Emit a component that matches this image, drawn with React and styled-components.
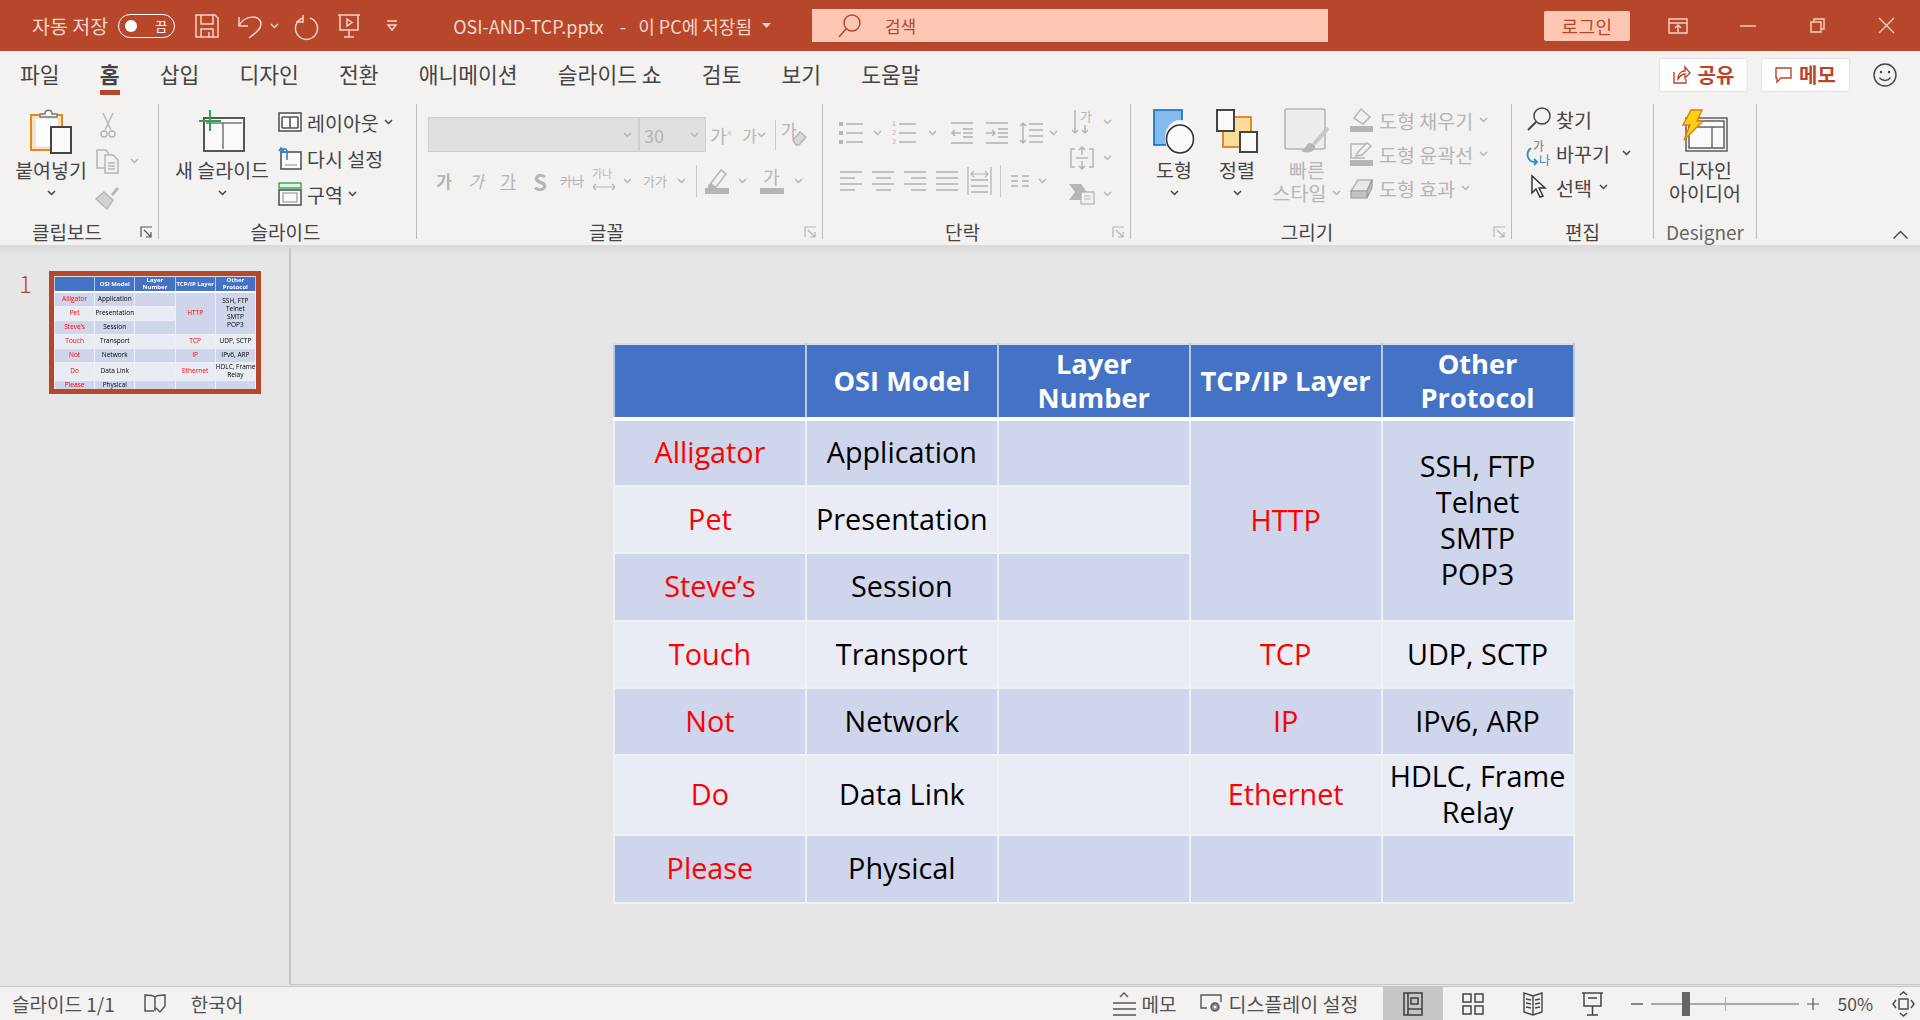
import React from 'react';
import styled, { createGlobalStyle } from 'styled-components';

const UI_FONT = '"Noto Sans CJK KR", "Noto Sans", sans-serif';
const DISABLED = '#b5b5b5';
const DARK = '#444';

const GlobalStyle = createGlobalStyle`
  html, body {
    margin: 0;
    padding: 0;
    background: #e6e6e6;
    overflow: hidden;
  }
  * {
    box-sizing: border-box;
  }
  svg {
    display: block;
    flex-shrink: 0;
    overflow: visible;
  }
`;

const Page = styled.div`
  width: 1920px;
  height: 1020px;
  display: flex;
  flex-direction: column;
  font-family: ${UI_FONT};
  color: ${DARK};
`;

/* title bar */
const TitleBar = styled.div`
  height: 51px;
  flex-shrink: 0;
  background: #b7472a;
  color: #f9d8cc;
  display: flex;
  align-items: center;
  padding-left: 32px;
  font-size: 18px;
`;

const TitleSlot = styled.div`
  margin-left: ${(p) => p.$ml || 0}px;
  font-size: ${(p) => p.$fs || 18}px;
  display: flex;
  align-items: center;
  white-space: pre;
`;

const Toggle = styled.div`
  width: 57px;
  height: 24px;
  border: 1.5px solid #fff;
  border-radius: 12px;
  display: flex;
  align-items: center;
  justify-content: space-between;
  padding: 0 7px 0 6px;
  font-size: 13px;
  color: #fff;

  &::before {
    content: '';
    width: 12px;
    height: 12px;
    border-radius: 50%;
    background: #fff;
  }
`;

const SearchBox = styled.div`
  width: 516px;
  height: 33px;
  margin-left: 41px;
  background: #fec7b4;
  color: #b7472a;
  display: flex;
  align-items: center;
  gap: 24px;
  padding-left: 27px;
  font-size: 17px;
`;

const LoginButton = styled.div`
  width: 86px;
  height: 30px;
  margin-left: 216px;
  background: #fec7b4;
  color: #b7472a;
  border-radius: 2px;
  display: flex;
  align-items: center;
  justify-content: center;
  font-size: 18px;
  letter-spacing: 0.5px;
`;

/* tabs */
const TabRow = styled.div`
  height: 47px;
  flex-shrink: 0;
  background: #f3f2f1;
  display: flex;
  align-items: center;
  gap: 40.2px;
  padding: 0 23px 0 20px;
`;

const Tab = styled.div`
  position: relative;
  font-size: 21.5px;
  line-height: 30px;
  margin-top: -2px;
  font-weight: ${(p) => (p.$active ? 700 : 400)};
  white-space: nowrap;

  ${(p) =>
    p.$active &&
    `
    &::after {
      content: '';
      position: absolute;
      left: 0;
      right: 0;
      bottom: -6px;
      height: 5px;
      background: #b7472a;
    }
  `}
`;

const TabActions = styled.div`
  margin-left: auto;
  display: flex;
  align-items: center;
  gap: 13px;
`;

const ActionButton = styled.div`
  width: 89px;
  height: 34px;
  background: #fff;
  border: 1px solid #e4e2e0;
  border-radius: 3px;
  color: #b7472a;
  font-size: 20px;
  font-weight: 700;
  display: flex;
  align-items: center;
  justify-content: center;
  gap: 7px;
`;

const Smile = styled.div`
  margin-left: 10px;
`;

/* ribbon */
const Ribbon = styled.div`
  height: 147px;
  flex-shrink: 0;
  background: #f3f2f1;
  display: flex;
  padding: 6px 0;
  position: relative;
`;

const Group = styled.div`
  width: ${(p) => p.$w}px;
  flex-shrink: 0;
  height: 135px;
  border-right: 1px solid #b9b9b9;
  position: relative;
  display: flex;
  flex-direction: column;
`;

const GroupBody = styled.div`
  height: 114px;
  display: flex;
  padding-left: ${(p) => p.$pl || 0}px;
`;

const GroupLabel = styled.div`
  height: 21px;
  line-height: 27px;
  text-align: center;
  font-size: 19px;
  padding-right: ${(p) => p.$pr || 0}px;
  color: ${(p) => p.$color || DARK};
`;

const Launcher = styled.div`
  position: absolute;
  right: 5px;
  bottom: 1px;
`;

const LargeButton = styled.div`
  width: ${(p) => p.$w}px;
  flex-shrink: 0;
  display: flex;
  flex-direction: column;
  align-items: center;
  padding-top: 3px;
  color: ${(p) => (p.$off ? DISABLED : DARK)};
`;

const LargeIcon = styled.div`
  height: 48px;
  margin-bottom: 3px;
  display: flex;
  align-items: center;
  justify-content: center;
`;

const LargeLine = styled.div`
  height: 23px;
  line-height: 23px;
  display: flex;
  align-items: center;
  justify-content: center;
  gap: 6px;
  font-size: 19.5px;
  white-space: nowrap;
`;

const SmallColumn = styled.div`
  margin-left: ${(p) => p.$ml || 0}px;
  margin-top: ${(p) => p.$mt || 0}px;
  display: flex;
  flex-direction: column;
`;

const SmallRow = styled.div`
  height: ${(p) => p.$h || 34}px;
  display: flex;
  align-items: center;
  gap: ${(p) => p.$gap || 0}px;
  font-size: 19.5px;
  white-space: nowrap;
  color: ${(p) => (p.$off ? DISABLED : DARK)};
`;

const Slot = styled.div`
  width: ${(p) => p.$w}px;
  flex-shrink: 0;
  display: flex;
  align-items: center;
  justify-content: center;
  color: ${DISABLED};
`;

const ToolRow = styled.div`
  height: 35px;
  display: flex;
  align-items: center;
  margin-left: ${(p) => p.$ml || 0}px;
  margin-top: ${(p) => p.$mt || 0}px;
`;

const ToolColumn = styled.div`
  display: flex;
  flex-direction: column;
`;

const ComboBox = styled.div`
  width: ${(p) => p.$w}px;
  height: 35px;
  flex-shrink: 0;
  background: #e1e0de;
  border: 1px solid #cfcfcf;
  display: flex;
  align-items: center;
  justify-content: space-between;
  padding: 0 6px 0 4px;
  font-size: 18px;
  color: ${DISABLED};
`;

const Glyph = styled.span`
  font-size: ${(p) => p.$size || 16}px;
  font-weight: ${(p) => (p.$bold ? 700 : 400)};
  font-style: ${(p) => (p.$italic ? 'italic' : 'normal')};
  text-decoration: ${(p) => p.$deco || 'none'};
  line-height: 1;
`;

const VLine = styled.div`
  width: 1px;
  height: ${(p) => p.$h || 30}px;
  background: #c8c8c8;
`;

const CollapseButton = styled.div`
  position: absolute;
  right: 12px;
  bottom: 6px;
`;

/* main area */
const Main = styled.div`
  flex: 1;
  min-height: 0;
  display: flex;
  border-bottom: 1px solid #c6c6c6;
  padding-bottom: 1px;
  background: #e6e6e6;
  position: relative;

  &::before {
    content: '';
    position: absolute;
    left: 0;
    right: 0;
    top: 0;
    height: 10px;
    background: linear-gradient(#d9d9d9, #e6e6e6);
  }
`;

const ThumbPane = styled.div`
  width: 291px;
  flex-shrink: 0;
  border-right: 2px solid #c6c6c6;
  margin-top: 3px;
  padding: 23px 0 0 19px;
  display: flex;
  align-items: flex-start;
  position: relative;
`;

const ThumbNumber = styled.div`
  width: 30px;
  color: #b7472a;
  font-size: 24px;
  font-weight: 300;
  line-height: 1;
`;

const Thumb = styled.div`
  width: 212px;
  height: 123px;
  border: 5px solid #b7472a;
  background: #eef0f6;
  overflow: hidden;
  filter: blur(0.35px);
`;

const Editor = styled.div`
  flex: 1;
  border-bottom: 1px solid #c6c6c6;
  padding: 98px 0 0 322px;
`;

const OsiGrid = styled.table`
  width: ${(p) => p.$cw * 5}px;
  table-layout: fixed;
  border-collapse: collapse;
  font-family: "Open Sans", "Noto Sans", sans-serif;
  font-size: ${(p) => p.$fs}px;
  line-height: ${(p) => p.$lh}px;
  text-align: center;
  color: #000;
  white-space: nowrap;
`;

const HeadCell = styled.th`
  padding: 0;
  background: #4472c4;
  color: #fff;
  font-size: ${(p) => p.$fs}px;
  line-height: ${(p) => p.$lh}px;
  font-weight: 700;
  border: ${(p) => p.$line}px solid #b9c8e6;
  border-bottom: ${(p) => p.$line * 2}px solid #fff;
  border-top-color: #d7dcea;
`;

const BodyCell = styled.td`
  padding: 0 0 ${(p) => p.$line}px;
  background: ${(p) => (p.$alt ? '#e9ebf5' : '#cfd5ea')};
  color: ${(p) => (p.$red ? '#ff0000' : '#000')};
  border: ${(p) => p.$line}px solid #eef0f7;
`;

/* status bar */
const StatusBar = styled.div`
  height: 33px;
  flex-shrink: 0;
  background: #f3f2f1;
  display: flex;
  align-items: center;
  font-size: 19.5px;
  color: #505050;
  padding: 0 5px 0 12px;
`;

const StatusItem = styled.div`
  margin-left: ${(p) => p.$ml || 0}px;
  font-size: ${(p) => p.$fs || 19}px;
  display: flex;
  align-items: center;
  gap: ${(p) => p.$gap || 0}px;
  white-space: nowrap;
`;

const StatusRight = styled.div`
  margin-left: auto;
  display: flex;
  align-items: center;
`;

const ViewButton = styled.div`
  width: ${(p) => p.$w}px;
  height: 33px;
  flex-shrink: 0;
  display: flex;
  align-items: center;
  justify-content: center;
  background: ${(p) => (p.$on ? '#c6c6c6' : 'transparent')};
`;

const ZoomTrack = styled.div`
  width: 148px;
  height: 2px;
  margin: 0 8px;
  background: #aaa;
  position: relative;
`;

const ZoomHandle = styled.div`
  position: absolute;
  left: 31px;
  top: -11px;
  width: 8px;
  height: 24px;
  background: #666;
`;

const ZoomTick = styled.div`
  position: absolute;
  left: 74px;
  top: -6px;
  width: 1px;
  height: 14px;
  background: #aaa;
`;

/* icons */
const Chev = ({ off, color }) => (
  <svg width="9" height="6" viewBox="0 0 9 6" fill="none" stroke={color || (off ? DISABLED : '#444')} strokeWidth="1.5">
    <path d="M1 1l3.5 3.5L8 1" />
  </svg>
);

const Launch = ({ off }) => (
  <svg width="13" height="12" viewBox="0 0 13 12" fill="none" stroke={off ? DISABLED : '#555'} strokeWidth="1.2">
    <path d="M1 11V1h11M4 4l7 7M11 6v5H6" />
  </svg>
);

const Lines = ({ x = 0, w = 22, ys, color = DISABLED, sw = 1.6 }) => (
  <g stroke={color} strokeWidth={sw}>
    {ys.map((y) => (
      <line key={y} x1={x} x2={x + w} y1={y} y2={y} />
    ))}
  </g>
);

const PasteIcon = () => (
  <svg width="42" height="46" viewBox="0 0 42 46">
    <rect x="1" y="7" width="31" height="35" fill="#fbe3c0" stroke="#e08a1e" strokeWidth="2" />
    <rect x="5" y="10" width="23" height="29" fill="#fff" stroke="#ddd" />
    <path d="M10 9V6h5c0-5 7-5 7 0h5v3z" fill="#fafafa" stroke="#777" strokeWidth="1.4" />
    <rect x="21" y="19" width="20" height="26" fill="#fafafa" stroke="#444" strokeWidth="2" />
  </svg>
);

const CutIcon = () => (
  <svg width="16" height="26" viewBox="0 0 16 26" fill="none" stroke={DISABLED} strokeWidth="1.4">
    <path d="M3 1l8 17M13 1L5 18" />
    <circle cx="4" cy="22" r="3" />
    <circle cx="12" cy="22" r="3" />
  </svg>
);

const CopyIcon = () => (
  <svg width="24" height="25" viewBox="0 0 24 25" fill="none" stroke={DISABLED} strokeWidth="1.5">
    <path d="M9 19H1V1h9l3 4" />
    <path d="M9 6h8l5 5v13H9z" fill="#f3f2f1" />
    <path d="M12 14h7M12 17h7M12 20h7" />
  </svg>
);

const PainterIcon = () => (
  <svg width="25" height="25" viewBox="0 0 25 25">
    <path d="M16 9L22 2l2 2-6 7z" fill={DISABLED} />
    <path d="M9 7l9 8-6 9-11-10z" fill="#d2d2d2" stroke={DISABLED} strokeWidth="1.4" />
  </svg>
);

const NewSlideIcon = () => (
  <svg width="46" height="42" viewBox="0 0 46 42" fill="none">
    <rect x="5" y="8" width="40" height="33" fill="#fafafa" stroke="#555" strokeWidth="2" />
    <path d="M7 13h36M24 13v26" stroke="#777" strokeWidth="1.5" />
    <path d="M11 0v21M0 11h22" stroke="#2ea44f" strokeWidth="2" />
  </svg>
);

const LayoutIcon = () => (
  <svg width="24" height="20" viewBox="0 0 24 20" fill="none" stroke="#555" strokeWidth="1.6">
    <rect x="1" y="1" width="22" height="18" fill="#fafafa" />
    <path d="M4 5h16M4 16h16M12 5v11M4 5v11M20 5v11" />
  </svg>
);

const ResetIcon = () => (
  <svg width="24" height="24" viewBox="0 0 24 24" fill="none">
    <rect x="3" y="6" width="20" height="17" fill="#fafafa" stroke="#555" strokeWidth="1.6" />
    <path d="M7 19h12" stroke="#888" />
    <path d="M8 14V5c0-3-6-3-6 1M0 5l2-3 3 3" transform="translate(1 0)" stroke="#2b88d8" strokeWidth="1.6" />
  </svg>
);

const SectionIcon = () => (
  <svg width="24" height="24" viewBox="0 0 24 24" fill="none">
    <rect x="1" y="1" width="22" height="5" fill="#e4f3e6" stroke="#2ea44f" strokeWidth="1.4" />
    <rect x="1" y="8" width="22" height="15" fill="#fafafa" stroke="#555" strokeWidth="1.6" />
    <rect x="5" y="11" width="14" height="9" stroke="#888" />
  </svg>
);

const ClearFmtIcon = () => (
  <svg width="26" height="26" viewBox="0 0 26 26">
    <text x="0" y="15" fontSize="17" fill={DISABLED} fontFamily={UI_FONT}>가</text>
    <path d="M12 18l7-8 6 5-7 8h-3z" fill="#d8d8d8" stroke={DISABLED} strokeWidth="1.4" />
  </svg>
);

const SpacingIcon = () => (
  <svg width="24" height="26" viewBox="0 0 24 26" fill="none" stroke={DISABLED}>
    <text x="0" y="10" fontSize="11" fill={DISABLED} stroke="none" fontFamily={UI_FONT}>가나</text>
    <path d="M1 19h22M1 19l3-3M1 19l3 3M23 19l-3-3M23 19l-3 3" strokeWidth="1.2" />
  </svg>
);

const HighlightIcon = () => (
  <svg width="24" height="26" viewBox="0 0 24 26">
    <path d="M6 15L16 2l5 4-10 13-6 1z" fill="#f3f2f1" stroke={DISABLED} strokeWidth="1.5" />
    <path d="M3 17l3-2 5 4-1 1H3z" fill={DISABLED} />
    <rect x="0" y="20" width="24" height="6" fill={DISABLED} />
  </svg>
);

const FontColorIcon = () => (
  <svg width="24" height="26" viewBox="0 0 24 26">
    <text x="3" y="16" fontSize="18" fill={DISABLED} fontFamily={UI_FONT}>가</text>
    <rect x="0" y="20" width="24" height="6" fill={DISABLED} />
  </svg>
);

const BulletsIcon = ({ numbered }) => (
  <svg width="24" height="24" viewBox="0 0 24 24">
    {numbered ? (
      <g fill={DISABLED} fontSize="7" fontFamily={UI_FONT}>
        <text x="0" y="5">1</text>
        <text x="0" y="14">2</text>
        <text x="0" y="23">3</text>
      </g>
    ) : (
      <g fill={DISABLED}>
        <rect x="0" y="1" width="4" height="4" />
        <rect x="0" y="10" width="4" height="4" />
        <rect x="0" y="19" width="4" height="4" />
      </g>
    )}
    <Lines x={7} w={17} ys={[3, 12, 21]} />
  </svg>
);

const IndentIcon = ({ flip }) => (
  <svg width="22" height="24" viewBox="0 0 22 24" fill="none">
    <Lines w={22} ys={[2, 22]} />
    <Lines x={12} w={10} ys={[8, 12, 16]} />
    <path d={flip ? 'M0 12h9M6 9l3 3-3 3' : 'M1 12h9M4 9l-3 3 3 3'} stroke={DISABLED} strokeWidth="1.5" />
  </svg>
);

const LineSpaceIcon = () => (
  <svg width="24" height="24" viewBox="0 0 24 24" fill="none">
    <Lines x={10} w={14} ys={[3, 9, 15, 21]} />
    <path d="M4 2v20M1 5l3-3 3 3M1 19l3 3 3-3" stroke={DISABLED} strokeWidth="1.5" />
  </svg>
);

const AlignIcon = ({ kind }) => {
  const short = kind === 'left' ? [0, 15] : kind === 'center' ? [4, 15] : kind === 'right' ? [7, 15] : [0, 22];
  return (
    <svg width="22" height="22" viewBox="0 0 22 22">
      <Lines w={22} ys={[2, 14]} />
      <Lines x={short[0]} w={short[1]} ys={[8, 20]} />
    </svg>
  );
};

const DistributedIcon = () => (
  <svg width="25" height="28" viewBox="0 0 25 28" fill="none" stroke={DISABLED}>
    <path d="M1 0v28M24 0v28" strokeWidth="1.3" />
    <path d="M4 7h17M4 7l3-3M4 7l3 3M21 7l-3-3M21 7l-3 3" strokeWidth="1.2" />
    <Lines x={4} w={17} ys={[13, 19, 25]} />
  </svg>
);

const ColumnsIcon = () => (
  <svg width="18" height="14" viewBox="0 0 18 14">
    <Lines w={7} ys={[2, 7, 12]} />
    <Lines x={11} w={7} ys={[2, 7, 12]} />
  </svg>
);

const DirectionIcon = () => (
  <svg width="20" height="26" viewBox="0 0 20 26" fill="none" stroke={DISABLED} strokeWidth="1.5">
    <path d="M3 1v23M0 21l3 3 3-3M13 16v8M10 21l3 3 3-3" />
    <text x="8" y="12" fontSize="13" fill={DISABLED} stroke="none" fontFamily={UI_FONT}>가</text>
  </svg>
);

const VAlignIcon = () => (
  <svg width="24" height="24" viewBox="0 0 24 24" fill="none" stroke={DISABLED} strokeWidth="1.5">
    <path d="M5 3H1v18h4M19 3h4v18h-4M12 1v8M9 4l3-3 3 3M12 23v-8M9 20l3 3 3-3M6 12h12" />
  </svg>
);

const SmartArtIcon = () => (
  <svg width="26" height="22" viewBox="0 0 26 22" fill="none">
    <path d="M0 1h12l6 8-6 8H0l6-8z" fill={DISABLED} />
    <rect x="12" y="9" width="13" height="12" fill="#f3f2f1" stroke={DISABLED} strokeWidth="1.3" />
    <path d="M15 13h7M15 16h7" stroke={DISABLED} />
  </svg>
);

const ShapesIcon = () => (
  <svg width="42" height="44" viewBox="0 0 42 44">
    <rect x="1" y="1" width="28" height="35" fill="#85bbec" stroke="#106ebe" strokeWidth="1.6" />
    <ellipse cx="27" cy="29" rx="15" ry="18" fill="#fff" opacity="0.9" />
    <ellipse cx="27" cy="30" rx="13.5" ry="14" fill="#fafafa" stroke="#333" strokeWidth="1.6" />
  </svg>
);

const ArrangeIcon = () => (
  <svg width="42" height="44" viewBox="0 0 42 44">
    <rect x="7" y="8" width="28" height="30" fill="#fbdc98" stroke="#d9730d" strokeWidth="1.6" />
    <rect x="1" y="1" width="17" height="21" fill="#fafafa" stroke="#444" strokeWidth="2" />
    <rect x="24" y="23" width="17" height="20" fill="#fafafa" stroke="#444" strokeWidth="2" />
  </svg>
);

const QuickStyleIcon = () => (
  <svg width="46" height="46" viewBox="0 0 46 46" fill="none">
    <rect x="1" y="1" width="40" height="40" rx="2" fill="#ededed" stroke={DISABLED} strokeWidth="1.6" />
    <path d="M44 20L30 36" stroke="#c8c8c8" strokeWidth="4" />
    <path d="M25 35c5 0 8 3 5 7-3 3-9 3-13 1 4-2 5-6 8-8z" fill={DISABLED} />
  </svg>
);

const FillIcon = () => (
  <svg width="23" height="24" viewBox="0 0 23 24">
    <path d="M4 10l7-9 9 8-7 7z" fill="#f3f2f1" stroke={DISABLED} strokeWidth="1.5" />
    <rect x="0" y="18" width="23" height="6" fill={DISABLED} />
  </svg>
);

const OutlineIcon = () => (
  <svg width="23" height="24" viewBox="0 0 23 24" fill="none">
    <path d="M16 2H1v14h14" stroke={DISABLED} strokeWidth="1.5" />
    <path d="M6 14l2-4L17 1l4 3-9 9z" fill="#f3f2f1" stroke={DISABLED} strokeWidth="1.4" />
    <rect x="0" y="18" width="23" height="6" fill={DISABLED} />
  </svg>
);

const EffectIcon = () => (
  <svg width="23" height="21" viewBox="0 0 23 21">
    <path d="M1 13L8 2h14l-5 11z" fill="#e8e8e8" stroke={DISABLED} strokeWidth="1.6" />
    <path d="M1 13h16v7H1zM17 13l5-11v7l-5 11z" fill="#c4c4c4" stroke="#999" strokeWidth="1.2" />
  </svg>
);

const FindIcon = () => (
  <svg width="24" height="24" viewBox="0 0 24 24" fill="none" stroke="#444" strokeWidth="1.5">
    <circle cx="15" cy="9" r="8" />
    <path d="M9 15L1 23" strokeWidth="2" />
  </svg>
);

const ReplaceIcon = () => (
  <svg width="26" height="26" viewBox="0 0 26 26" fill="none">
    <text x="7" y="11" fontSize="12" fill="#777" fontFamily={UI_FONT}>가</text>
    <text x="13" y="25" fontSize="12" fill="#2b88d8" fontFamily={UI_FONT}>나</text>
    <path d="M5 8C-1 13 1 23 11 22M8 19l3 3-3 3" stroke="#2b88d8" strokeWidth="1.8" />
  </svg>
);

const CursorIcon = () => (
  <svg width="18" height="24" viewBox="0 0 18 24">
    <path d="M2 1v17l4-4 4 8 3-1-4-8h6z" fill="#fafafa" stroke="#333" strokeWidth="1.5" />
  </svg>
);

const DesignerIcon = () => (
  <svg width="46" height="42" viewBox="0 0 46 42" fill="none">
    <rect x="4" y="8" width="41" height="33" stroke="#555" strokeWidth="1.4" />
    <rect x="7" y="11" width="35" height="27" fill="#fafafa" stroke="#555" strokeWidth="1.4" />
    <path d="M10 17h32M30 17v21" stroke="#666" strokeWidth="1.4" />
    <path d="M9 0h11l-5 11h6L2 30l6-15H1z" fill="#fcd116" stroke="#e07a10" strokeWidth="1.4" />
  </svg>
);

const ShareIcon = () => (
  <svg width="18" height="18" viewBox="0 0 18 18" fill="none" stroke="#b7472a" strokeWidth="1.4">
    <path d="M1 6v11h12v-4M5 13c0-5 3-8 7-8V1l5 6-5 5V8c-3 0-5 2-7 5z" />
  </svg>
);

const CommentIcon = () => (
  <svg width="17" height="16" viewBox="0 0 17 16" fill="none" stroke="#b7472a" strokeWidth="1.4">
    <path d="M1 1h15v10H6l-4 4v-4H1z" />
  </svg>
);

const SmileIcon = () => (
  <svg width="24" height="24" viewBox="0 0 24 24" fill="none" stroke="#444" strokeWidth="1.4">
    <circle cx="12" cy="12" r="11" />
    <circle cx="8" cy="9" r="1.2" fill="#444" stroke="none" />
    <circle cx="16" cy="9" r="1.2" fill="#444" stroke="none" />
    <path d="M6.5 14.5c2.5 4 8.5 4 11 0" />
  </svg>
);

const tint = '#f6d2c5';

const SaveIcon = () => (
  <svg width="24" height="24" viewBox="0 0 24 24" fill="none" stroke={tint} strokeWidth="1.5">
    <path d="M1 1h19l3 3v19H1z" />
    <path d="M6 1v9h12V1M6 23v-8h12v8M14 18v5" />
  </svg>
);

const UndoIcon = () => (
  <svg width="24" height="26" viewBox="0 0 24 26" fill="none" stroke={tint} strokeWidth="1.5">
    <path d="M1 4v9h9M1 13C6 2 23 1 23 11c0 6-7 10-12 14" />
  </svg>
);

const RedoIcon = () => (
  <svg width="24" height="26" viewBox="0 0 24 26" fill="none" stroke={tint} strokeWidth="1.5">
    <path d="M15 4a11 11 0 1 1-7 0M8 1v7H1" transform="translate(1 1)" />
  </svg>
);

const PresentIcon = () => (
  <svg width="24" height="24" viewBox="0 0 24 24" fill="none" stroke={tint} strokeWidth="1.5">
    <path d="M1 1h22M3 1v15h18V1M12 16v7M7 23h10" />
    <path d="M10 5l5 3.5-5 3.5z" />
  </svg>
);

const CustomizeIcon = () => (
  <svg width="10" height="12" viewBox="0 0 10 12" fill="none" stroke={tint} strokeWidth="1.5">
    <path d="M0 1h10M1 5l4 5 4-5z" />
  </svg>
);

const Caret = () => (
  <svg width="9" height="5" viewBox="0 0 9 5">
    <path d="M0 0h9L4.5 5z" fill={tint} />
  </svg>
);

const SearchIcon = () => (
  <svg width="22" height="24" viewBox="0 0 22 24" fill="none" stroke="#b7472a" strokeWidth="1.5">
    <circle cx="13" cy="9" r="8" />
    <path d="M7 15L0 23" />
  </svg>
);

const RibbonModeIcon = () => (
  <svg width="20" height="16" viewBox="0 0 20 16" fill="none" stroke={tint} strokeWidth="1.4">
    <path d="M1 1h18v14H1zM1 5h18M10 14V7M7 10l3-3 3 3" />
  </svg>
);

const MinimizeIcon = () => (
  <svg width="16" height="2" viewBox="0 0 16 2">
    <path d="M0 1h16" stroke={tint} strokeWidth="1.4" />
  </svg>
);

const RestoreIcon = () => (
  <svg width="15" height="15" viewBox="0 0 15 15" fill="none" stroke={tint} strokeWidth="1.4">
    <path d="M1 4h10v10H1zM4 4V1h10v10h-3" />
  </svg>
);

const CloseIcon = () => (
  <svg width="15" height="15" viewBox="0 0 15 15" fill="none" stroke={tint} strokeWidth="1.4">
    <path d="M0 0l15 15M15 0L0 15" />
  </svg>
);

const BookCheckIcon = () => (
  <svg width="22" height="20" viewBox="0 0 22 20" fill="none" stroke="#555" strokeWidth="1.5">
    <path d="M11 3C9 1 5 1 1 1v16h9M11 3c2-2 6-2 10-2v11M11 3v14M12 14l4 4 5-6" />
  </svg>
);

const NotesIcon = () => (
  <svg width="25" height="24" viewBox="0 0 25 24" fill="none" stroke="#555" strokeWidth="1.4">
    <path d="M8 5l4-4 4 4M1 11h23M1 17h23M1 23h23" />
  </svg>
);

const DisplayIcon = () => (
  <svg width="22" height="20" viewBox="0 0 22 20" fill="none" stroke="#555" strokeWidth="1.4">
    <path d="M7 14H1V1h20v7" />
    <circle cx="15" cy="13" r="4" fill="#888" />
    <circle cx="15" cy="13" r="1.5" fill="#f3f2f1" stroke="none" />
  </svg>
);

const NormalViewIcon = () => (
  <svg width="20" height="24" viewBox="0 0 20 24" fill="none" stroke="#444" strokeWidth="1.6">
    <rect x="1" y="1" width="18" height="22" />
    <path d="M5 1v22M5 17h14" />
    <rect x="8" y="6" width="7" height="6" />
  </svg>
);

const SorterIcon = () => (
  <svg width="22" height="22" viewBox="0 0 22 22" fill="none" stroke="#444" strokeWidth="1.5">
    <rect x="1" y="1" width="8" height="8" />
    <rect x="13" y="1" width="8" height="8" />
    <rect x="1" y="13" width="8" height="8" />
    <rect x="13" y="13" width="8" height="8" />
  </svg>
);

const ReadingIcon = () => (
  <svg width="20" height="24" viewBox="0 0 20 24" fill="none" stroke="#444" strokeWidth="1.4">
    <path d="M10 4L1 1v19l9 3 9-3V1zM10 4v19" />
    <path d="M3 7l5 1M3 11l5 1M3 15l5 1M17 7l-5 1M17 11l-5 1M17 15l-5 1" />
  </svg>
);

const ShowViewIcon = () => (
  <svg width="21" height="24" viewBox="0 0 21 24" fill="none" stroke="#444" strokeWidth="1.5">
    <path d="M0 1h21M2 1v13h17V1M10.5 14v9M5 23h11M6 6h9" />
  </svg>
);

const FitIcon = () => (
  <svg width="23" height="26" viewBox="0 0 23 26" fill="none" stroke="#444" strokeWidth="1.4">
    <rect x="7" y="8" width="9" height="10" />
    <path d="M8 4l3.5-3L15 4M8 22l3.5 3 3.5-3M4 9l-3 4 3 4M19 9l3 4-3 4" />
  </svg>
);

/* table */
const rows = [
  { left: 'Alligator', osi: 'Application', proto: 'HTTP', other: ['SSH, FTP', 'Telnet', 'SMTP', 'POP3'], span: 3 },
  { left: 'Pet', osi: 'Presentation', skip: true, alt: true },
  { left: 'Steve’s', osi: 'Session', skip: true },
  { left: 'Touch', osi: 'Transport', proto: 'TCP', other: ['UDP, SCTP'], alt: true },
  { left: 'Not', osi: 'Network', proto: 'IP', other: ['IPv6, ARP'] },
  { left: 'Do', osi: 'Data Link', proto: 'Ethernet', other: ['HDLC, Frame', 'Relay'], alt: true },
  { left: 'Please', osi: 'Physical', proto: '', other: [''] },
];

const OsiTable = ({ cw, fs, hfs, lh, hlh, line, heights }) => {
  const head = { $line: line, $fs: hfs, $lh: hlh };
  return (
    <OsiGrid $cw={cw} $fs={fs} $lh={lh}>
      <thead>
        <tr style={{ height: heights[0] }}>
          <HeadCell {...head} />
          <HeadCell {...head}>OSI Model</HeadCell>
          <HeadCell {...head}>Layer<br />Number</HeadCell>
          <HeadCell {...head}>TCP/IP Layer</HeadCell>
          <HeadCell {...head}>Other<br />Protocol</HeadCell>
        </tr>
      </thead>
      <tbody>
        {rows.map((row, i) => (
          <tr key={row.left} style={{ height: heights[i + 1] }}>
            <BodyCell $line={line} $alt={row.alt} $red>{row.left}</BodyCell>
            <BodyCell $line={line} $alt={row.alt}>{row.osi}</BodyCell>
            <BodyCell $line={line} $alt={row.alt} />
            {!row.skip && (
              <BodyCell $line={line} $alt={row.alt} $red rowSpan={row.span || 1}>{row.proto}</BodyCell>
            )}
            {!row.skip && (
              <BodyCell $line={line} $alt={row.alt} rowSpan={row.span || 1}>
                {row.other.map((text, j) => (
                  <React.Fragment key={text}>
                    {j > 0 && <br />}
                    {text}
                  </React.Fragment>
                ))}
              </BodyCell>
            )}
          </tr>
        ))}
      </tbody>
    </OsiGrid>
  );
};

const tabs = ['파일', '홈', '삽입', '디자인', '전환', '애니메이션', '슬라이드 쇼', '검토', '보기', '도움말'];

function App() {
  return (
    <Page>
      <GlobalStyle />
      <TitleBar>
        <TitleSlot $fs={19.5}>자동 저장</TitleSlot>
        <TitleSlot $ml={10}><Toggle>끔</Toggle></TitleSlot>
        <TitleSlot $ml={20}><SaveIcon /></TitleSlot>
        <TitleSlot $ml={19}><UndoIcon /></TitleSlot>
        <TitleSlot $ml={8}><Chev color={tint} /></TitleSlot>
        <TitleSlot $ml={15}><RedoIcon /></TitleSlot>
        <TitleSlot $ml={19}><PresentIcon /></TitleSlot>
        <TitleSlot $ml={26}><CustomizeIcon /></TitleSlot>
        <TitleSlot $ml={56}>OSI-AND-TCP.pptx{'    '}-{'   '}이 PC에 저장됨</TitleSlot>
        <TitleSlot $ml={10}><Caret /></TitleSlot>
        <SearchBox><SearchIcon />검색</SearchBox>
        <LoginButton>로그인</LoginButton>
        <TitleSlot $ml={38}><RibbonModeIcon /></TitleSlot>
        <TitleSlot $ml={52}><MinimizeIcon /></TitleSlot>
        <TitleSlot $ml={54}><RestoreIcon /></TitleSlot>
        <TitleSlot $ml={54}><CloseIcon /></TitleSlot>
      </TitleBar>

      <TabRow>
        {tabs.map((tab) => (
          <Tab key={tab} $active={tab === '홈'}>{tab}</Tab>
        ))}
        <TabActions>
          <ActionButton><ShareIcon />공유</ActionButton>
          <ActionButton><CommentIcon />메모</ActionButton>
          <Smile><SmileIcon /></Smile>
        </TabActions>
      </TabRow>

      <Ribbon>
        <Group $w={159}>
          <GroupBody $pl={16}>
            <LargeButton $w={70}>
              <LargeIcon><PasteIcon /></LargeIcon>
              <LargeLine>붙여넣기</LargeLine>
              <LargeLine><Chev /></LargeLine>
            </LargeButton>
            <SmallColumn $ml={8} $mt={3}>
              <SmallRow $h={36}><Slot $w={27}><CutIcon /></Slot></SmallRow>
              <SmallRow $h={36}><Slot $w={27}><CopyIcon /></Slot><Slot $w={27}><Chev off /></Slot></SmallRow>
              <SmallRow $h={36}><Slot $w={27}><PainterIcon /></Slot></SmallRow>
            </SmallColumn>
          </GroupBody>
          <GroupLabel $pr={24}>클립보드</GroupLabel>
          <Launcher><Launch /></Launcher>
        </Group>

        <Group $w={258}>
          <GroupBody $pl={13}>
            <LargeButton $w={100}>
              <LargeIcon><NewSlideIcon /></LargeIcon>
              <LargeLine>새 슬라이드</LargeLine>
              <LargeLine><Chev /></LargeLine>
            </LargeButton>
            <SmallColumn $ml={6}>
              <SmallRow $h={36} $gap={5}><LayoutIcon />레이아웃<Chev /></SmallRow>
              <SmallRow $h={36} $gap={5}><ResetIcon />다시 설정</SmallRow>
              <SmallRow $h={36} $gap={5}><SectionIcon />구역<Chev /></SmallRow>
            </SmallColumn>
          </GroupBody>
          <GroupLabel $pr={4}>슬라이드</GroupLabel>
        </Group>

        <Group $w={406}>
          <GroupBody $pl={11}>
            <ToolColumn>
              <ToolRow $mt={13}>
                <ComboBox $w={211}><span /><Chev off /></ComboBox>
                <ComboBox $w={67}>30<Chev off /></ComboBox>
                <Slot $w={30}><Glyph $size={18}>가</Glyph><Glyph $size={10}>^</Glyph></Slot>
                <Slot $w={36}><Glyph $size={16}>가</Glyph><Chev off /></Slot>
                <Slot $w={6}><VLine /></Slot>
                <Slot $w={32}><ClearFmtIcon /></Slot>
              </ToolRow>
              <ToolRow $mt={11}>
                <Slot $w={32}><Glyph $size={17} $bold>가</Glyph></Slot>
                <Slot $w={32}><Glyph $size={17} $italic>가</Glyph></Slot>
                <Slot $w={32}><Glyph $size={17} $deco="underline">가</Glyph></Slot>
                <Slot $w={32}><Glyph $size={22} $bold>S</Glyph></Slot>
                <Slot $w={32}><Glyph $size={13} $deco="line-through">가나</Glyph></Slot>
                <Slot $w={32}><SpacingIcon /></Slot>
                <Slot $w={14}><Chev off /></Slot>
                <Slot $w={42}><Glyph $size={13}>가가</Glyph></Slot>
                <Slot $w={10}><Chev off /></Slot>
                <Slot $w={20}><VLine $h={32} /></Slot>
                <Slot $w={22}><HighlightIcon /></Slot>
                <Slot $w={28}><Chev off /></Slot>
                <Slot $w={32}><FontColorIcon /></Slot>
                <Slot $w={20}><Chev off /></Slot>
              </ToolRow>
            </ToolColumn>
          </GroupBody>
          <GroupLabel $pr={26}>글꼴</GroupLabel>
          <Launcher><Launch off /></Launcher>
        </Group>

        <Group $w={308}>
          <GroupBody $pl={16}>
            <ToolColumn>
              <ToolRow $mt={11}>
                <Slot $w={24}><BulletsIcon /></Slot>
                <Slot $w={28}><Chev off /></Slot>
                <Slot $w={26}><BulletsIcon numbered /></Slot>
                <Slot $w={30}><Chev off /></Slot>
                <Slot $w={30}><IndentIcon /></Slot>
                <Slot $w={40}><IndentIcon flip /></Slot>
                <Slot $w={28}><LineSpaceIcon /></Slot>
                <Slot $w={16}><Chev off /></Slot>
              </ToolRow>
              <ToolRow $mt={13} $ml={-4}>
                <Slot $w={32}><AlignIcon kind="left" /></Slot>
                <Slot $w={32}><AlignIcon kind="center" /></Slot>
                <Slot $w={32}><AlignIcon kind="right" /></Slot>
                <Slot $w={32}><AlignIcon kind="full" /></Slot>
                <Slot $w={32}><DistributedIcon /></Slot>
                <Slot $w={10}><VLine $h={32} /></Slot>
                <Slot $w={30}><ColumnsIcon /></Slot>
                <Slot $w={14}><Chev off /></Slot>
              </ToolRow>
            </ToolColumn>
            <SmallColumn>
              <SmallRow $h={36} $off><Slot $w={42}><DirectionIcon /></Slot><Slot $w={9}><Chev off /></Slot></SmallRow>
              <SmallRow $h={36} $off><Slot $w={42}><VAlignIcon /></Slot><Slot $w={9}><Chev off /></Slot></SmallRow>
              <SmallRow $h={36} $off><Slot $w={42}><SmartArtIcon /></Slot><Slot $w={9}><Chev off /></Slot></SmallRow>
            </SmallColumn>
          </GroupBody>
          <GroupLabel $pr={28}>단락</GroupLabel>
          <Launcher><Launch off /></Launcher>
        </Group>

        <Group $w={381}>
          <GroupBody $pl={12}>
            <LargeButton $w={62}>
              <LargeIcon><ShapesIcon /></LargeIcon>
              <LargeLine>도형</LargeLine>
              <LargeLine><Chev /></LargeLine>
            </LargeButton>
            <LargeButton $w={64}>
              <LargeIcon><ArrangeIcon /></LargeIcon>
              <LargeLine>정렬</LargeLine>
              <LargeLine><Chev /></LargeLine>
            </LargeButton>
            <LargeButton $w={76} $off>
              <LargeIcon><QuickStyleIcon /></LargeIcon>
              <LargeLine>빠른</LargeLine>
              <LargeLine>스타일<Chev off /></LargeLine>
            </LargeButton>
            <SmallColumn $ml={5} $mt={-1}>
              <SmallRow $off $gap={6}><FillIcon />도형 채우기<Chev off /></SmallRow>
              <SmallRow $off $gap={6}><OutlineIcon />도형 윤곽선<Chev off /></SmallRow>
              <SmallRow $off $gap={6}><EffectIcon />도형 효과<Chev off /></SmallRow>
            </SmallColumn>
          </GroupBody>
          <GroupLabel $pr={28}>그리기</GroupLabel>
          <Launcher><Launch off /></Launcher>
        </Group>

        <Group $w={142}>
          <GroupBody $pl={14}>
            <SmallColumn $mt={-2}>
              <SmallRow $gap={4}><Slot $w={26}><FindIcon /></Slot>찾기</SmallRow>
              <SmallRow $gap={4}><Slot $w={26}><ReplaceIcon /></Slot>바꾸기<Slot $w={25}><Chev /></Slot></SmallRow>
              <SmallRow $gap={4}><Slot $w={26}><CursorIcon /></Slot>선택<Slot $w={16}><Chev /></Slot></SmallRow>
            </SmallColumn>
          </GroupBody>
          <GroupLabel>편집</GroupLabel>
        </Group>

        <Group $w={103}>
          <GroupBody>
            <LargeButton $w={102}>
              <LargeIcon><DesignerIcon /></LargeIcon>
              <LargeLine>디자인</LargeLine>
              <LargeLine>아이디어</LargeLine>
            </LargeButton>
          </GroupBody>
          <GroupLabel $color="#666">Designer</GroupLabel>
        </Group>

        <CollapseButton>
          <svg width="15" height="8" viewBox="0 0 15 8" fill="none" stroke="#444" strokeWidth="1.4">
            <path d="M0.5 7.5L7.5 0.5l7 7" />
          </svg>
        </CollapseButton>
      </Ribbon>

      <Main>
        <ThumbPane>
          <ThumbNumber>1</ThumbNumber>
          <Thumb>
            <OsiTable cw={40.4} fs={6.5} hfs={6} lh={8} hlh={7} line={1} heights={[15, 14, 14, 14, 14, 14, 17, 11]} />
          </Thumb>
        </ThumbPane>
        <Editor>
          <OsiTable cw={192.3} fs={28.8} hfs={27.2} lh={36} hlh={34} line={2} heights={[75, 67, 67, 68, 67, 67, 80, 68]} />
        </Editor>
      </Main>

      <StatusBar>
        <StatusItem>슬라이드 1/1</StatusItem>
        <StatusItem $ml={29}><BookCheckIcon /></StatusItem>
        <StatusItem $ml={25}>한국어</StatusItem>
        <StatusRight>
          <StatusItem $gap={5}><NotesIcon />메모</StatusItem>
          <StatusItem $ml={23} $gap={7} $fs={19.5}><DisplayIcon />디스플레이 설정</StatusItem>
          <StatusItem $ml={25}>
            <ViewButton $w={60} $on><NormalViewIcon /></ViewButton>
            <ViewButton $w={60}><SorterIcon /></ViewButton>
            <ViewButton $w={59}><ReadingIcon /></ViewButton>
            <ViewButton $w={60}><ShowViewIcon /></ViewButton>
          </StatusItem>
          <StatusItem $ml={9}>
            <svg width="12" height="2" viewBox="0 0 12 2"><path d="M0 1h12" stroke="#555" strokeWidth="1.4" /></svg>
            <ZoomTrack><ZoomTick /><ZoomHandle /></ZoomTrack>
            <svg width="12" height="12" viewBox="0 0 12 12"><path d="M0 6h12M6 0v12" stroke="#555" strokeWidth="1.2" /></svg>
          </StatusItem>
          <StatusItem $ml={18} $fs={17.5}>50%</StatusItem>
          <StatusItem $ml={19}><FitIcon /></StatusItem>
        </StatusRight>
      </StatusBar>
    </Page>
  );
}

export default App;
